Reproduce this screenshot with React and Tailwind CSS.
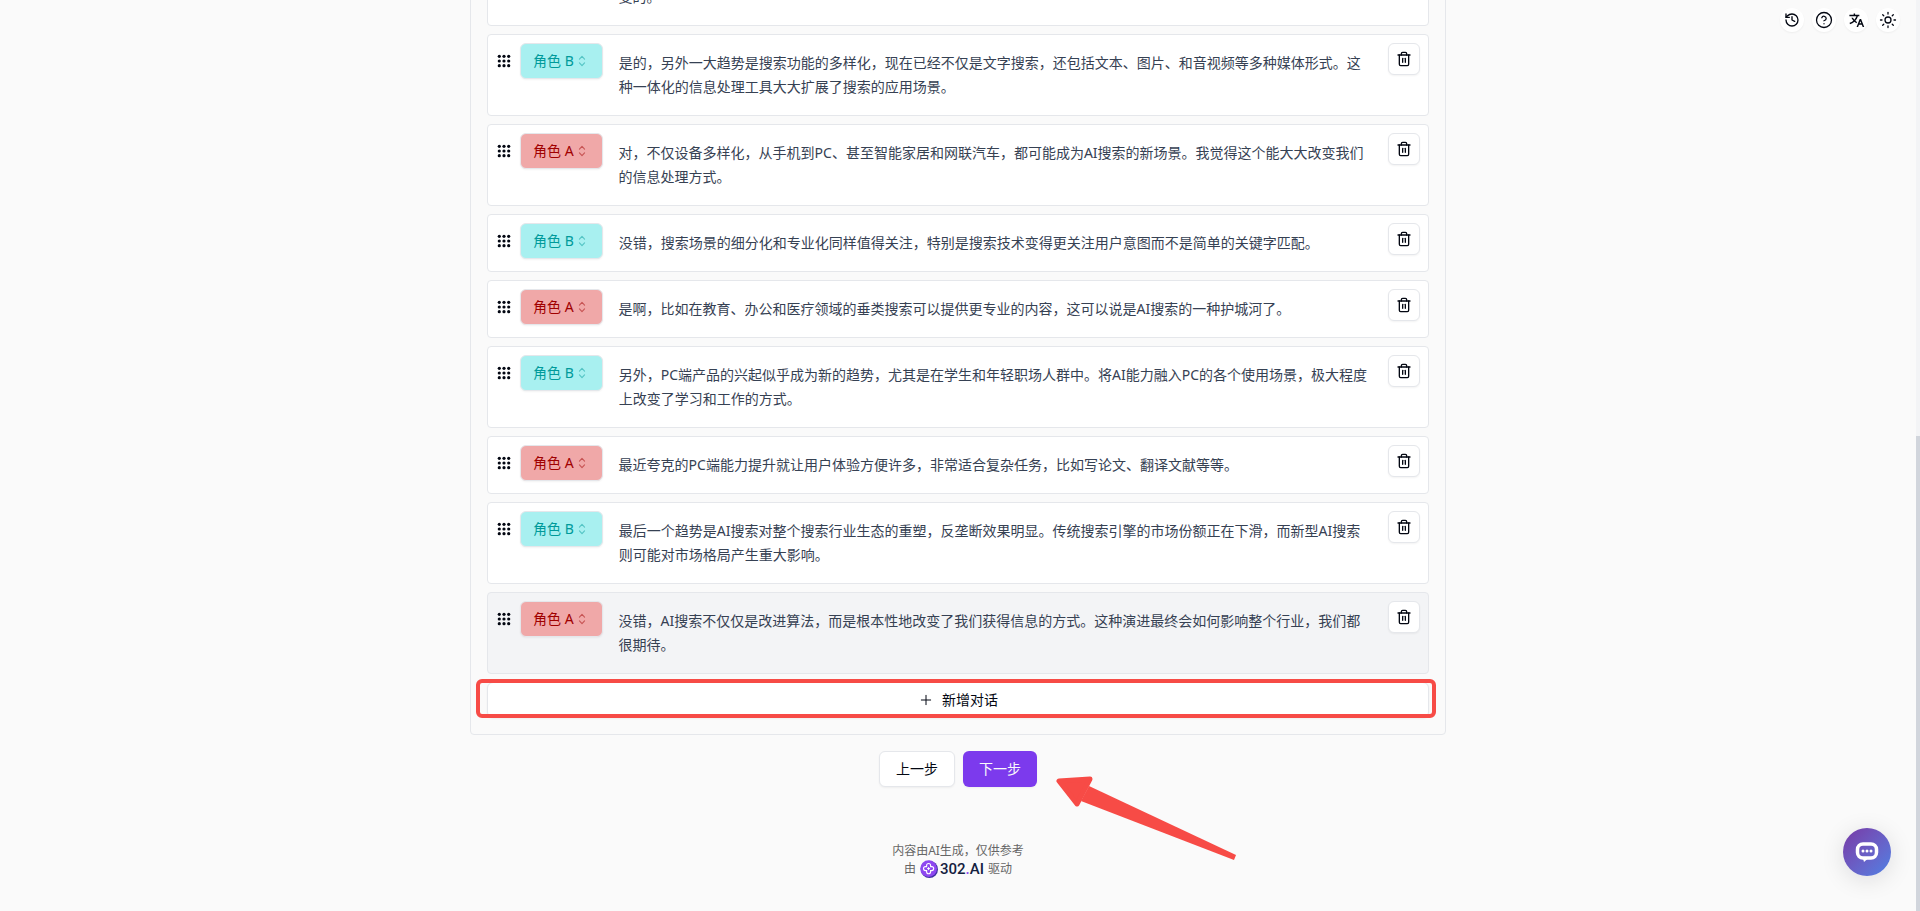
import { useState } from "react";
import { CircleQuestionMark, History, Plus, Sun, Trash2 } from "lucide-react";
import { RiTranslate2 } from "react-icons/ri";

const initialDialogs = [
  { id: 1, role: "A", text: "是啊，现在的搜索引擎不再只是给出一堆链接，而是直接理解用户的问题并给出整理好的答案，这种体验可以说是完全改变的。" },
  { id: 2, role: "B", text: "是的，另外一大趋势是搜索功能的多样化，现在已经不仅是文字搜索，还包括文本、图片、和音视频等多种媒体形式。这种一体化的信息处理工具大大扩展了搜索的应用场景。" },
  { id: 3, role: "A", text: "对，不仅设备多样化，从手机到PC、甚至智能家居和网联汽车，都可能成为AI搜索的新场景。我觉得这个能大大改变我们的信息处理方式。" },
  { id: 4, role: "B", text: "没错，搜索场景的细分化和专业化同样值得关注，特别是搜索技术变得更关注用户意图而不是简单的关键字匹配。" },
  { id: 5, role: "A", text: "是啊，比如在教育、办公和医疗领域的垂类搜索可以提供更专业的内容，这可以说是AI搜索的一种护城河了。" },
  { id: 6, role: "B", text: "另外，PC端产品的兴起似乎成为新的趋势，尤其是在学生和年轻职场人群中。将AI能力融入PC的各个使用场景，极大程度上改变了学习和工作的方式。" },
  { id: 7, role: "A", text: "最近夸克的PC端能力提升就让用户体验方便许多，非常适合复杂任务，比如写论文、翻译文献等等。" },
  { id: 8, role: "B", text: "最后一个趋势是AI搜索对整个搜索行业生态的重塑，反垄断效果明显。传统搜索引擎的市场份额正在下滑，而新型AI搜索则可能对市场格局产生重大影响。" },
  { id: 9, role: "A", text: "没错，AI搜索不仅仅是改进算法，而是根本性地改变了我们获得信息的方式。这种演进最终会如何影响整个行业，我们都很期待。", active: true },
];

const roleStyles = {
  A: "bg-[#f0a8a8] text-[#a00000]",
  B: "bg-[#a8f0f0] text-[#009a9a]",
};

const DragDots = () => (
  <svg width="16" height="16" viewBox="0 0 16 16" fill="currentColor">
    {[3.3, 8, 12.7].map((y) =>
      [3.3, 8, 12.7].map((x) => <circle key={`${x}-${y}`} cx={x} cy={y} r="1.6" />)
    )}
  </svg>
);

const CaretSort = () => (
  <svg width="16" height="16" viewBox="0 0 15 15" fill="none" stroke="currentColor" strokeLinecap="round" strokeLinejoin="round" className="pointer-events-none absolute right-3 top-1/2 -translate-y-1/2 opacity-50">
    <path d="M5.1 5.8 7.5 3.2 9.9 5.8M5.1 9.2 7.5 11.8 9.9 9.2" />
  </svg>
);

const DialogRow = ({ item, onRole, onDelete }) => (
  <li className={`flex items-start rounded border border-gray-200 p-2 ${item.active ? "bg-gray-100" : "bg-white"}`}>
    <button aria-label="拖动排序" className="flex h-9 w-4 cursor-grab items-center">
      <DragDots />
    </button>
    <div className={`relative ml-2 flex h-9 rounded-md border border-gray-200 shadow-xs ${roleStyles[item.role]}`}>
      <select aria-label="角色" className="field-sizing-content h-full appearance-none bg-transparent pl-3 pr-7 text-sm outline-none" value={item.role} onChange={(e) => onRole(item.id, e.target.value)}>
        <option value="A">角色 A</option>
        <option value="B">角色 B</option>
      </select>
      <CaretSort />
    </div>
    <p className="flex-1 px-4 py-2 text-sm leading-6 text-gray-700">{item.text}</p>
    <button aria-label="删除" className="flex size-8 items-center justify-center rounded-md border border-gray-200 bg-white shadow-xs" onClick={() => onDelete(item.id)}>
      <Trash2 size={16} />
    </button>
  </li>
);

const Toolbar = () => (
  <div className="absolute right-5 top-2 flex gap-2">
    <button aria-label="历史记录" className="flex size-6 items-center justify-center rounded-full bg-white shadow-xs"><History size={16} /></button>
    <button aria-label="帮助" className="flex size-6 items-center justify-center rounded-full bg-white shadow-xs"><CircleQuestionMark size={18} strokeWidth={1.7} /></button>
    <button aria-label="语言" className="flex size-6 items-center justify-center rounded-full bg-white shadow-xs"><RiTranslate2 size={17} /></button>
    <button aria-label="主题" className="flex size-6 items-center justify-center rounded-full bg-white shadow-xs"><Sun size={18} strokeWidth={1.7} /></button>
  </div>
);

const Brand = () => (
  <a href="#" className="flex items-center gap-0.5 font-['Roboto',sans-serif] text-[15px] font-medium leading-5 text-[#14213f]">
    <svg width="18" height="18" viewBox="0 0 18 18" fill="none">
      <circle cx="9.4" cy="9.4" r="8.6" fill="#3f2fa3" />
      <circle cx="8.6" cy="8.6" r="8.4" fill="#8e47f0" />
      <path d="M6.600 6.600V5.500a2 2 0 0 1 4 0V6.600h1.100a2 2 0 0 1 0 4h-1.100v1.100a2 2 0 0 1-4 0v-1.100H5.500a2 2 0 0 1 0-4Z" stroke="#fff" strokeWidth="1.1" />
      <path d="M8.600 7.100v3M7.100 8.600h3" stroke="#fff" strokeWidth="1" />
    </svg>
    <span>302<span className="text-[#8e47f0]">.</span>AI</span>
  </a>
);

export default function App() {
  const [dialogs, setDialogs] = useState(initialDialogs);

  const changeRole = (id, role) => {
    setDialogs((ds) => ds.map((d) => (d.id === id ? { ...d, role } : d)));
  };

  const deleteDialog = (id) => {
    setDialogs((ds) => ds.filter((d) => d.id !== id));
  };

  const addDialog = () => {
    setDialogs((ds) => [...ds, { id: Date.now(), role: "B", text: "" }]);
  };

  return (
    <div className="relative flex h-screen overflow-hidden bg-[#fafafa] font-['Noto_Sans','Noto_Sans_CJK_SC',sans-serif] text-sm text-gray-950">
      {/* scrolled to the bottom of the page */}
      <div className="flex min-w-0 flex-1 flex-col justify-end">
        <main className="mx-auto w-full max-w-[976px] shrink-0">
          <section className="rounded border border-gray-200 p-4">
            <ul className="flex flex-col gap-2">
              {dialogs.map((item) => (
                <DialogRow key={item.id} item={item} onRole={changeRole} onDelete={deleteDialog} />
              ))}
            </ul>
            <div className="relative mt-2">
              <button className="flex h-9 w-full items-center justify-center gap-2 rounded-md border border-gray-200 bg-white shadow-xs" onClick={addDialog}>
                <Plus size={16} strokeWidth={1.5} />
                新增对话
              </button>
              <div className="pointer-events-none absolute -left-[11px] -right-[7px] -top-[3px] bottom-0 rounded-md border-4 border-[#f74b46]" />
            </div>
          </section>
          <div className="relative mt-4 flex justify-center gap-2">
            <button className="h-9 rounded-md border border-gray-200 bg-white px-4 shadow-xs">上一步</button>
            <button className="h-9 rounded-md bg-[#7c3aed] px-4 text-gray-50 shadow-xs">下一步</button>
            <svg width="182" height="86" viewBox="0 0 182 86" className="pointer-events-none absolute left-[586px] top-[24px]">
              <path d="M3 6 34 4 21 29Z" fill="#f74b46" stroke="#f74b46" strokeWidth="5" strokeLinejoin="round" />
              <path d="M33 11 180 80 178 85 25 26Z" fill="#f74b46" />
            </svg>
          </div>
        </main>
        <footer className="mt-14 flex shrink-0 flex-col items-center pb-8 text-xs text-[#666]">
          <p className="leading-4">内容由AI生成，仅供参考</p>
          <div className="flex items-center gap-1">
            由
            <Brand />
            驱动
          </div>
        </footer>
      </div>
      <div className="flex w-1 flex-col justify-end bg-gray-100">
        <div className="h-[475px] bg-gray-300" />
      </div>
      <Toolbar />
      <button aria-label="在线客服" className="absolute bottom-[35px] right-[29px] flex size-12 items-center justify-center rounded-full bg-linear-to-br from-[#7638a6] to-[#4b80e4] shadow-[0_4px_24px_rgba(2,6,23,0.12)]">
        <svg width="24" height="22" viewBox="0 0 24 22" fill="none">
          <rect x="2.500" y="3" width="19" height="14" rx="5.500" stroke="#fff" strokeWidth="3.500" />
          <path d="M8 17.500h5L9 21Z" fill="#fff" />
          <circle cx="8" cy="10" r="1.500" fill="#fff" />
          <circle cx="12" cy="10" r="1.500" fill="#fff" />
          <circle cx="16" cy="10" r="1.500" fill="#fff" />
        </svg>
      </button>
    </div>
  );
}
